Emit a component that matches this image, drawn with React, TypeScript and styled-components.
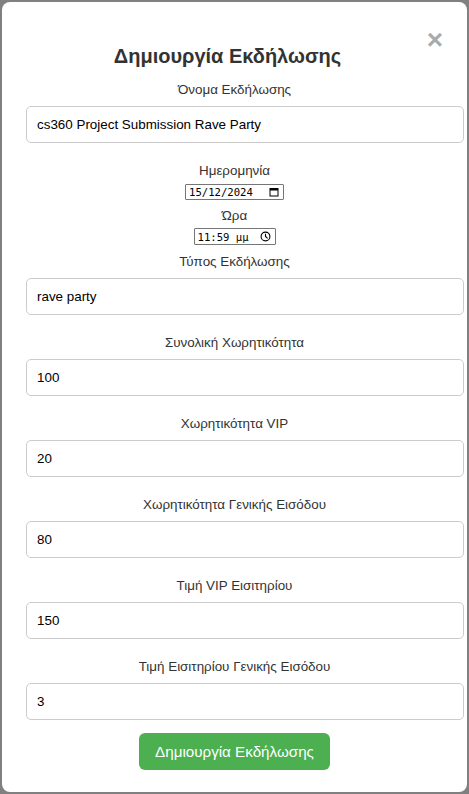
import React from "react";
import styled, { createGlobalStyle } from "styled-components";

const GlobalStyle = createGlobalStyle`
  html, body { margin: 0; padding: 0; }
  body {
    background: #808080;
    font-family: "Liberation Sans", Arial, sans-serif;
  }
  * { box-sizing: border-box; }
`;

const Backdrop = styled.div`
  width: 469px;
  height: 794px;
  padding: 2px;
  display: flex;
  align-items: flex-start;
`;

const Modal = styled.div`
  position: relative;
  width: 465px;
  height: 790px;
  background: #fff;
  border-radius: 8px;
  padding-top: 43px;
  display: flex;
  flex-direction: column;
  align-items: center;
`;

const Close = styled.span`
  position: absolute;
  top: 24px;
  right: 24px;
  font-size: 28px;
  line-height: 28px;
  font-weight: bold;
  color: #aaa;
  cursor: pointer;
`;

const Title = styled.h2`
  margin: 0 14px 14px 0;
  font-size: 20px;
  line-height: 23px;
  font-weight: bold;
  color: #333;
`;

const Label = styled.label<{ $gap?: number }>`
  display: block;
  font-size: 13.4px;
  line-height: 16px;
  color: #333;
  margin-bottom: ${(p) => (p.$gap ?? 8)}px;
`;

const TextInput = styled.input<{ $last?: boolean }>`
  align-self: stretch;
  margin: 0 3px ${(p) => (p.$last ? 13 : 20)}px 24px;
  height: 37px;
  padding: 0 10px;
  border: 1px solid #ccc;
  border-radius: 5px;
  font-family: "Liberation Sans", Arial, sans-serif;
  font-size: 13.4px;
  color: #000;
  background: #fff;
  outline: none;
`;

const NativeField = styled.div<{ $width: number; $height: number; $gap: number }>`
  display: flex;
  align-items: center;
  justify-content: space-between;
  width: ${(p) => p.$width}px;
  height: ${(p) => p.$height}px;
  margin-bottom: ${(p) => p.$gap}px;
  padding: 0 4px 0 3px;
  border: 1px solid #767676;
  border-radius: 1px;
  font-family: "DejaVu Sans Mono", "Liberation Mono", monospace;
  font-size: 10.6px;
  color: #000;
  background: #fff;
`;

const FieldText = styled.span`
  white-space: pre;
  line-height: 12px;
`;

const PickerIcon = styled.svg`
  display: block;
  flex: none;
`;

const SubmitButton = styled.button`
  height: 37px;
  padding: 0 16px;
  border: none;
  border-radius: 6px;
  background: #4caf50;
  color: #fff;
  font-family: "Liberation Sans", Arial, sans-serif;
  font-size: 15.2px;
  cursor: pointer;
`;

const CalendarIcon = () => (
  <PickerIcon width="10" height="10" viewBox="0 0 10 10">
    <rect x="1" y="1.5" width="8" height="7.5" fill="none" stroke="#000" strokeWidth="1" />
    <rect x="1" y="1.5" width="8" height="2" fill="#000" />
  </PickerIcon>
);

const ClockIcon = () => (
  <PickerIcon width="11" height="11" viewBox="0 0 11 11">
    <circle cx="5.5" cy="5.5" r="4.4" fill="none" stroke="#000" strokeWidth="1.1" />
    <path d="M5.5 2.8 V5.5 L7.6 7.4" fill="none" stroke="#000" strokeWidth="1.1" />
  </PickerIcon>
);

const fields = [
  { label: "Συνολική Χωρητικότητα", value: "100" },
  { label: "Χωρητικότητα VIP", value: "20" },
  { label: "Χωρητικότητα Γενικής Εισόδου", value: "80" },
  { label: "Τιμή VIP Εισιτηρίου", value: "150" },
  { label: "Τιμή Εισιτηρίου Γενικής Εισόδου", value: "3" },
];

export default function App() {
  return (
    <>
      <GlobalStyle />
      <Backdrop>
        <Modal>
          <Close>&times;</Close>
          <Title>Δημιουργία Εκδήλωσης</Title>

          <Label>Όνομα Εκδήλωσης</Label>
          <TextInput defaultValue="cs360 Project Submission Rave Party" />

          <Label $gap={5}>Ημερομηνία</Label>
          <NativeField $width={99} $height={16} $gap={8}>
            <FieldText>15/12/2024</FieldText>
            <CalendarIcon />
          </NativeField>

          <Label $gap={4}>Ώρα</Label>
          <NativeField $width={82} $height={17} $gap={9}>
            <FieldText>11:59 μμ</FieldText>
            <ClockIcon />
          </NativeField>

          <Label>Τύπος Εκδήλωσης</Label>
          <TextInput defaultValue="rave party" />

          {fields.map((f, i) => (
            <React.Fragment key={f.label}>
              <Label>{f.label}</Label>
              <TextInput defaultValue={f.value} $last={i === fields.length - 1} />
            </React.Fragment>
          ))}

          <SubmitButton>Δημιουργία Εκδήλωσης</SubmitButton>
        </Modal>
      </Backdrop>
    </>
  );
}
